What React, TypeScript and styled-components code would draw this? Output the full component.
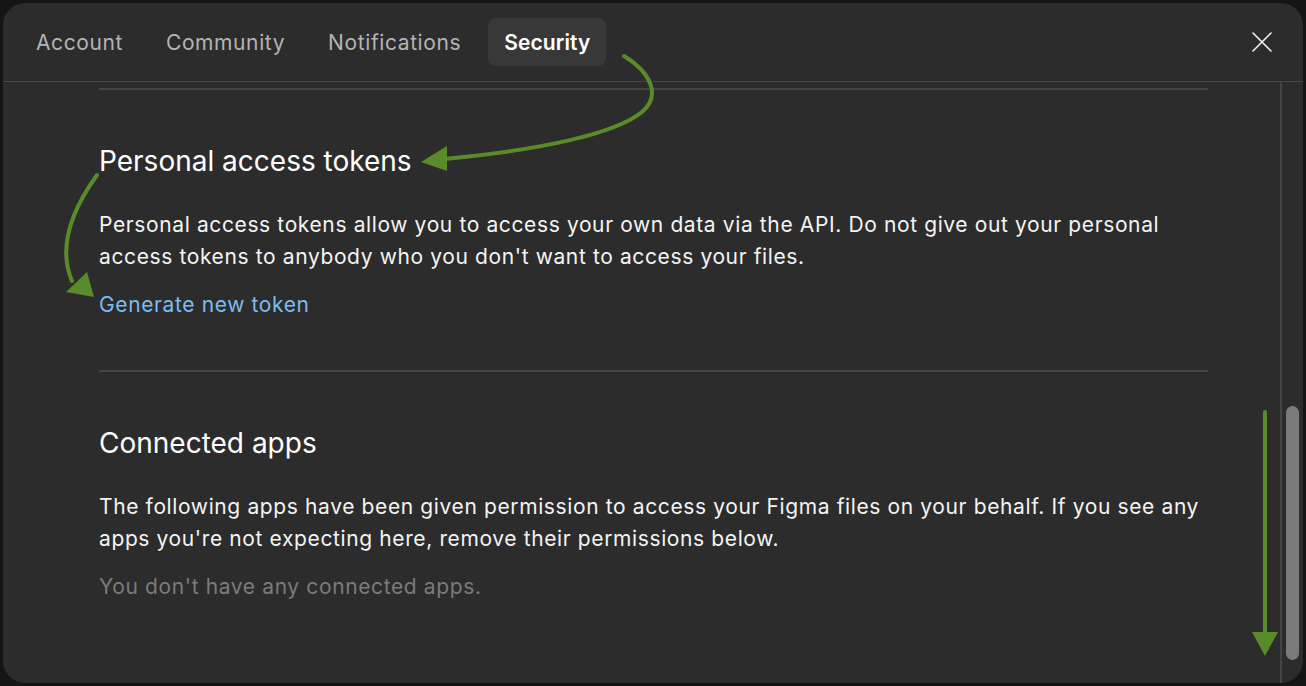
import styled, { createGlobalStyle } from "styled-components";

const GlobalStyle = createGlobalStyle`
  html, body {
    margin: 0;
    padding: 0;
    background: #151515;
    font-family: Inter, "Noto Sans", "Liberation Sans", sans-serif;
    -webkit-font-smoothing: antialiased;
  }
`;

const tabs = ["Account", "Community", "Notifications", "Security"];

const App = () => {
  return (
    <Page>
      <GlobalStyle />
      <Modal>
        <Header>
          <TabList>
            {tabs.map((tab) => (
              <Tab key={tab} isActive={tab === "Security"}>
                {tab}
              </Tab>
            ))}
          </TabList>
          <CloseButton aria-label="Close">
            <svg width="20" height="20" viewBox="0 0 20 20">
              <path
                d="M1 1 L19 19 M19 1 L1 19"
                stroke="#f2f2f2"
                strokeWidth="1.6"
                strokeLinecap="round"
              />
            </svg>
          </CloseButton>
        </Header>

        <Body>
          <Content>
            <Divider />
            <Section>
              <Title>Personal access tokens</Title>
              <Text>
                Personal access tokens allow you to access your own data via
                the API. Do not give out your personal access tokens to
                anybody who you don't want to access your files.
              </Text>
              <Link href="#">Generate new token</Link>
            </Section>
            <Divider />
            <Section>
              <Title>Connected apps</Title>
              <Text>
                The following apps have been given permission to access your
                Figma files on your behalf. If you see any apps you're not
                expecting here, remove their permissions below.
              </Text>
              <Muted>You don't have any connected apps.</Muted>
            </Section>
          </Content>
          <ScrollTrack>
            <ScrollThumb />
          </ScrollTrack>
        </Body>
      </Modal>

      <Annotations width="1306" height="686" viewBox="0 0 1306 686">
        <g fill="none" stroke="#5a8b2b" strokeWidth="4" strokeLinecap="round">
          <path d="M624 56 C650 72 662 95 642 112 C615 134 540 150 444 159" />
          <path d="M97 175 C74 207 57 246 72 281" />
          <path d="M1265 412 L1265 634" />
        </g>
        <g fill="#5a8b2b">
          <polygon points="421,162 447,146 447,171" />
          <polygon points="94,297 66,292 87,272" />
          <polygon points="1252,632 1278,632 1265,656" />
        </g>
      </Annotations>
    </Page>
  );
};

export default App;

const Page = styled.div`
  position: relative;
  width: 1306px;
  height: 686px;
  padding: 3px;
  box-sizing: border-box;
  overflow: hidden;
`;

const Modal = styled.div`
  display: flex;
  flex-direction: column;
  width: 1300px;
  height: 680px;
  background: #2c2c2c;
  border-radius: 22px;
  overflow: hidden;
`;

const Header = styled.div`
  display: flex;
  align-items: center;
  justify-content: space-between;
  height: 78px;
  padding: 0 29px 0 17px;
  border-bottom: 1px solid #454545;
  flex-shrink: 0;
`;

const TabList = styled.div`
  display: flex;
  align-items: center;
  gap: 11px;
`;

type TTab = {
  isActive: boolean;
};
const Tab = styled.div<TTab>`
  height: 48px;
  display: flex;
  align-items: center;
  padding: 0 16px;
  border-radius: 8px;
  font-size: 21px;
  letter-spacing: ${({ isActive }) => (isActive ? "0.1px" : "0.6px")};
  font-weight: ${({ isActive }) => (isActive ? 600 : 400)};
  color: ${({ isActive }) => (isActive ? "#ffffff" : "#b4b4b4")};
  background: ${({ isActive }) => (isActive ? "#383838" : "transparent")};
`;

const CloseButton = styled.button`
  display: flex;
  align-items: center;
  justify-content: center;
  width: 24px;
  height: 24px;
  padding: 0;
  border: none;
  background: none;
  cursor: pointer;
`;

const Body = styled.div`
  flex: 1;
  display: flex;
  min-height: 0;
`;

const Content = styled.div`
  flex: 1;
  padding: 6px 72px 0 96px;
`;

const Divider = styled.div`
  height: 2px;
  background: #444444;
`;

const Section = styled.div`
  display: flex;
  flex-direction: column;
  align-items: flex-start;
  padding: 55px 0 49px;
`;

const Title = styled.h2`
  margin: 0 0 32px;
  font-size: 28px;
  line-height: 32px;
  font-weight: 400;
  color: #ffffff;
`;

const Text = styled.p`
  margin: 0 0 16px;
  font-size: 21px;
  letter-spacing: 0.62px;
  line-height: 32px;
  color: #f4f4f4;
`;

const Link = styled.a`
  font-size: 21px;
  letter-spacing: 0.62px;
  line-height: 32px;
  color: #7cbcf0;
  text-decoration: none;
`;

const Muted = styled.div`
  font-size: 21px;
  letter-spacing: 0.62px;
  line-height: 32px;
  color: #7b7b7b;
`;

const ScrollTrack = styled.div`
  width: 23px;
  flex-shrink: 0;
  border-left: 2px solid #444444;
  padding: 324px 4px 22px 4px;
  box-sizing: border-box;
`;

const ScrollThumb = styled.div`
  width: 13px;
  height: 254px;
  border-radius: 7px;
  background: #7a7a7a;
`;

const Annotations = styled.svg`
  position: absolute;
  top: 0;
  left: 0;
  pointer-events: none;
`;
